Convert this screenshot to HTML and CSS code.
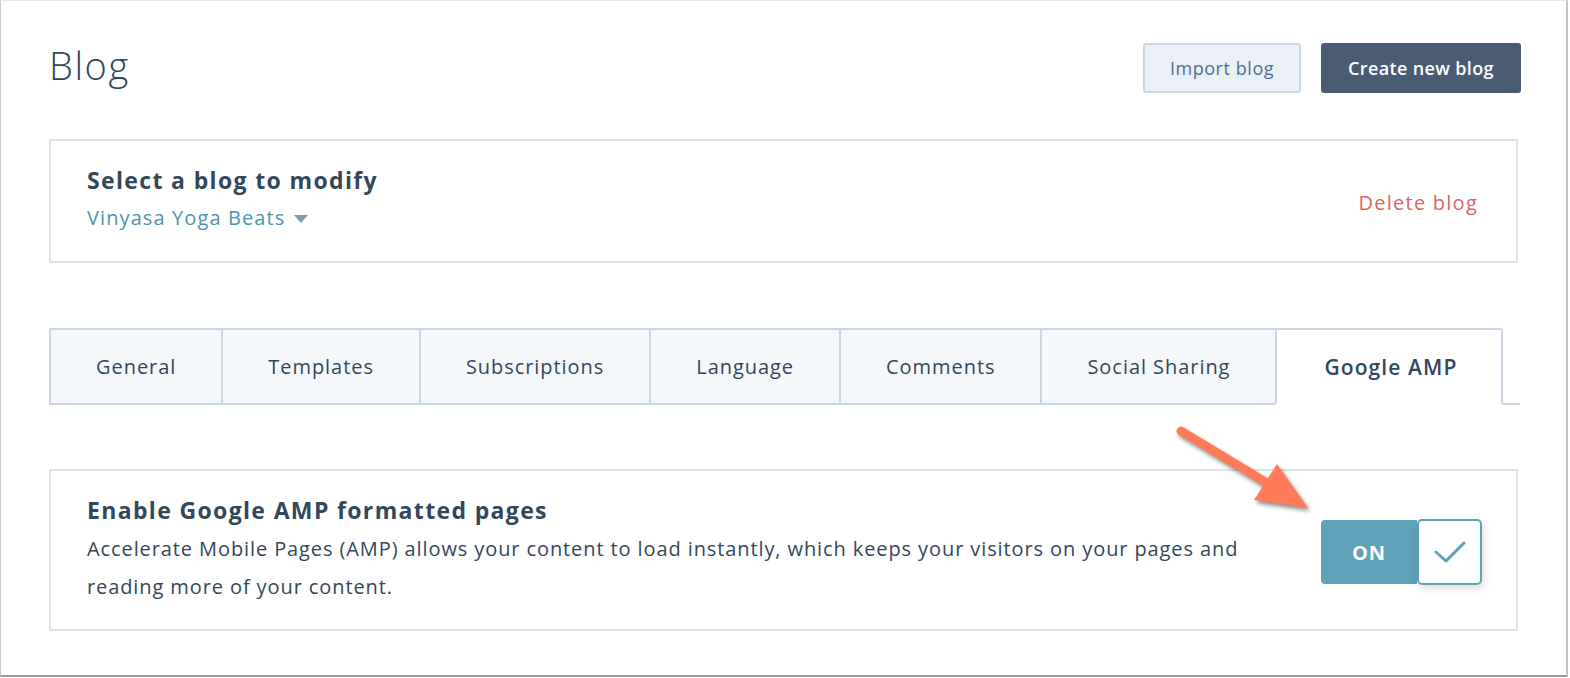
FILE: index.html
```html
<!DOCTYPE html>
<html lang="en">
<head>
    <meta charset="UTF-8">
    <title>Blog settings</title>
    <link rel="stylesheet" href="styles.css">
</head>
<body>
    <div class="window">
        <div class="header">
            <h1>Blog</h1>
            <div class="header-actions">
                <button class="btn btn-secondary">Import blog</button>
                <button class="btn btn-primary">Create new blog</button>
            </div>
        </div>

        <div class="card card-select">
            <div>
                <div class="card-title">Select a blog to modify</div>
                <div class="blog-picker">Vinyasa Yoga Beats <span class="caret"></span></div>
            </div>
            <a class="delete-link">Delete blog</a>
        </div>

        <div class="tabs">
            <div class="tab">General</div>
            <div class="tab">Templates</div>
            <div class="tab">Subscriptions</div>
            <div class="tab">Language</div>
            <div class="tab">Comments</div>
            <div class="tab">Social Sharing</div>
            <div class="tab active">Google AMP</div>
            <div class="tabs-fill"></div>
        </div>

        <div class="card card-setting">
            <div class="setting-text">
                <div class="card-title">Enable Google AMP formatted pages</div>
                <p>Accelerate Mobile Pages (AMP) allows your content to load instantly, which keeps your visitors on your pages and reading more of your content.</p>
            </div>
            <div class="toggle">
                <div class="toggle-on">ON</div>
                <div class="toggle-knob">
                    <svg width="32" height="24" viewBox="0 0 32 24">
                        <polyline points="2,12 12,21 30,3" fill="none" stroke="#5fa2b8" stroke-width="3" stroke-linecap="round" stroke-linejoin="round"/>
                    </svg>
                </div>
            </div>
        </div>

        <!-- callout arrow pointing at the toggle -->
        <svg class="callout" width="150" height="100" viewBox="0 0 150 100">
            <line x1="10" y1="10" x2="96" y2="62" stroke="#ff7a59" stroke-width="9" stroke-linecap="round"/>
            <polygon points="83,79 106,43 137,87" fill="#ff7a59"/>
        </svg>
    </div>
</body>
</html>
```

FILE: styles.css
```css
body {
    margin: 0;
    background-color: #ffffff;
    font-family: "Open Sans", Lato, sans-serif;
    letter-spacing: 0.05em;
    color: #33475b;
}
.window {
    position: relative;
    box-sizing: border-box;
    width: 1568px;
    height: 677px;
    padding: 0 48px;
    border-top: 1px solid #e8e8e8;
    border-left: 1px solid #c9c9c9;
    border-right: 2px solid #c4c4c4;
    border-bottom: 2px solid #9c9c9c;
}
.header {
    display: flex;
    align-items: center;
    justify-content: space-between;
    padding-top: 42px;
    margin-right: -3px;
}
.header h1 {
    margin: 0;
    padding-bottom: 6px;
    font-size: 38px;
    line-height: 44px;
    font-weight: 300;
    letter-spacing: 1.6px;
    color: #33475b;
}
.header-actions {
    display: flex;
    gap: 20px;
}
.btn {
    height: 50px;
    border-radius: 3px;
    font-family: inherit;
    font-size: 18px;
    cursor: pointer;
}
.btn-secondary {
    width: 158px;
    background-color: #eaf0f6;
    border: 2px solid #cbd6e2;
    color: #506e91;
    letter-spacing: 0.55px;
}
.btn-primary {
    width: 200px;
    background-color: #4a5b74;
    border: none;
    color: #ffffff;
    font-weight: 600;
    letter-spacing: 0.35px;
}
.card {
    display: flex;
    align-items: center;
    justify-content: space-between;
    border: 2px solid #dfe3eb;
}
.card-select {
    margin-top: 46px;
    height: 124px;
    box-sizing: border-box;
    padding: 0 38px 6px 36px;
}
.card-title {
    font-size: 23px;
    line-height: 32px;
    font-weight: 700;
    letter-spacing: 1.35px;
    color: #33475b;
}
.blog-picker {
    margin-top: 7px;
    font-size: 20px;
    line-height: 30px;
    letter-spacing: 1.1px;
    color: #5093ad;
}
.caret {
    display: inline-block;
    margin-left: 2px;
    vertical-align: middle;
    border-left: 7px solid transparent;
    border-right: 7px solid transparent;
    border-top: 8px solid #7c98b6;
}
.delete-link {
    margin-top: 8px;
    font-size: 20px;
    letter-spacing: 1.25px;
    color: #d66761;
    cursor: pointer;
}
.tabs {
    display: flex;
    margin-top: 65px;
    margin-right: -2px;
}
.tab {
    box-sizing: border-box;
    height: 77px;
    padding: 0 45px;
    display: flex;
    align-items: center;
    background-color: #f5f8fa;
    border: 2px solid #cbd6e2;
    margin-left: -2px;
    font-size: 20px;
    letter-spacing: 0.95px;
    color: #33475b;
}
.tab:first-child {
    margin-left: 0;
}
.tab.active {
    padding: 0 43px 0 47px;
    background-color: #ffffff;
    border-bottom-color: #ffffff;
    border-top-right-radius: 3px;
    font-size: 21px;
    font-weight: 600;
    letter-spacing: 1.1px;
}
.tabs-fill {
    flex: 1;
    border-bottom: 2px solid #cbd6e2;
}
.card-setting {
    margin-top: 64px;
    height: 162px;
    box-sizing: border-box;
    padding: 0 34px 0 36px;
}
.setting-text p {
    margin: 4px 0 0;
    font-size: 20px;
    line-height: 38px;
    letter-spacing: 0.9px;
    max-width: 1175px;
}
.toggle {
    display: flex;
    align-items: center;
    margin-top: 4px;
}
.toggle-on {
    width: 96px;
    height: 64px;
    display: flex;
    align-items: center;
    justify-content: center;
    background-color: #5fa2b8;
    border-radius: 4px 0 0 4px;
    color: #ffffff;
    font-size: 20px;
    font-weight: 700;
    letter-spacing: 1px;
}
.toggle-knob {
    box-sizing: border-box;
    width: 65px;
    height: 66px;
    display: flex;
    align-items: center;
    justify-content: center;
    background-color: #ffffff;
    border: 2px solid #5fa2b8;
    border-radius: 5px;
    box-shadow: 2px 4px 8px rgba(0, 0, 0, 0.12);
}
.callout {
    position: absolute;
    left: 1170px;
    top: 420px;
    filter: drop-shadow(2px 3px 2px rgba(0, 0, 0, 0.45));
}
```
